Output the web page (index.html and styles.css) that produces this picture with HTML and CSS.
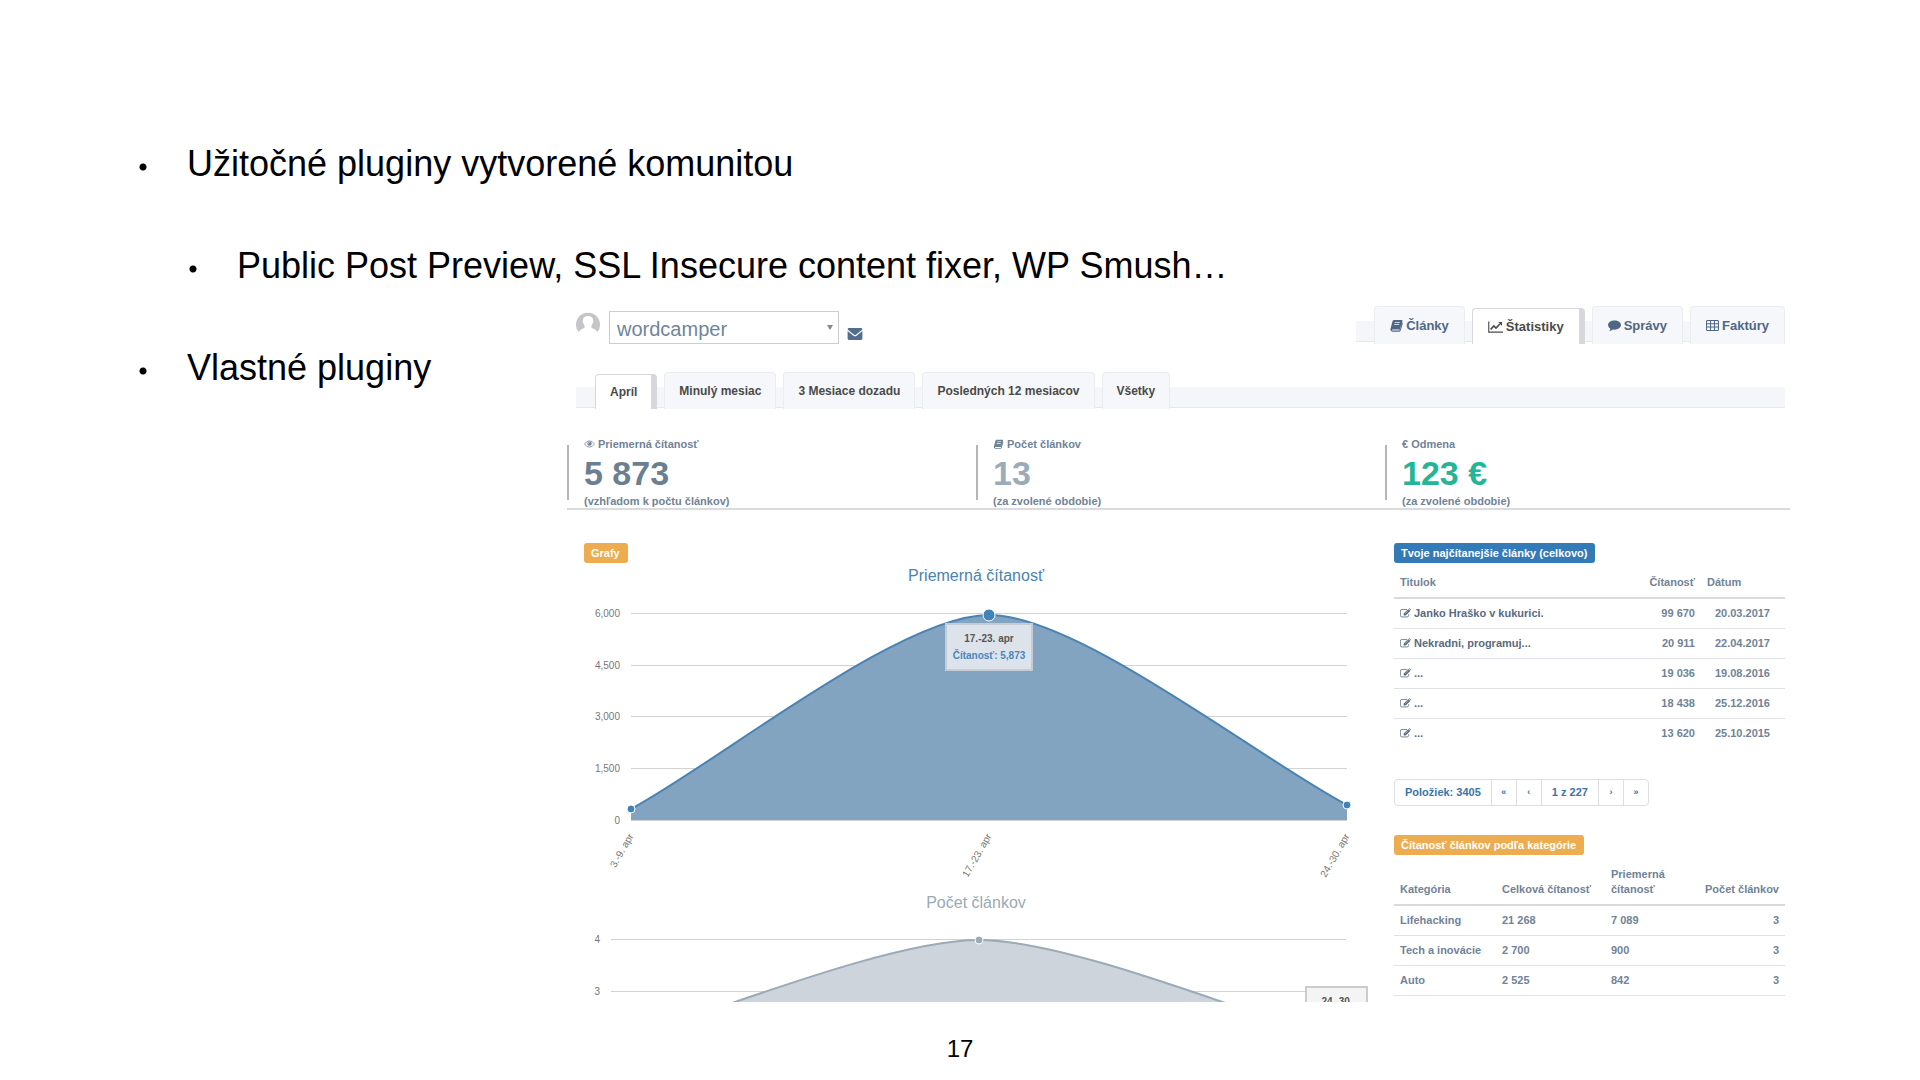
FILE: index.html
```
<!DOCTYPE html>
<html lang="sk">
<head>
    <meta charset="UTF-8">
    <meta name="viewport" content="width=device-width, initial-scale=1.0">
    <title>Užitočné pluginy</title>
    <link rel="stylesheet" href="styles.css">
</head>
<body>
    <!-- Icons shared by the tabs, stats and table -->
    <svg class="sprite" aria-hidden="true">
        <symbol id="icon-book" viewBox="0 0 14 14">
            <path fill="currentColor" fill-rule="evenodd" d="M4.5 1h8q1.2.1.9 1.300l-2.200 8q-.3 1-1.300 1H3q-1 0-1 .6t1 .6h7.200l2.800-8.800q1 .5.700 1.500l-2.200 7.200q-.4 1.200-1.500 1.200H2.300Q.2 13 .4 11L2.800 2.200Q3.200 1 4.500 1zM5.300 3.400l-.3.900h5.400l.3-.9zM4.700 5.600l-.3.900h5.400l.3-.9z"/>
        </symbol>
        <symbol id="icon-chart" viewBox="0 0 16 14">
            <path fill="none" stroke="currentColor" stroke-width="1.200" d="M.8 1v11.500H16"/>
            <path fill="none" stroke="currentColor" stroke-width="1.700" d="M2.800 9.500l3.500-3.600 2.200 2.200 4.200-4.300"/>
            <path fill="currentColor" d="M10.800 1.700H15v4.200z"/>
        </symbol>
        <symbol id="icon-comment" viewBox="0 0 14 14">
            <path fill="currentColor" d="M7 1.500c3.900 0 7 2.200 7 5s-3.100 5-7 5q-.9 0-1.700-.15Q3.600 12.800 1.200 13q1.200-1.100 1.300-2.500Q0 9 0 6.500c0-2.800 3.100-5 7-5z"/>
        </symbol>
        <symbol id="icon-table" viewBox="0 0 14 14">
            <path fill="none" stroke="currentColor" stroke-width="1.100" d="M1.600 1.500h10.800q1 0 1 1v9q0 1-1 1H1.600q-1 0-1-1v-9q0-1 1-1zM.6 5h12.800M.6 8.700h12.800M4.900 1.500v11M9.100 1.500v11"/>
        </symbol>
        <symbol id="icon-eye" viewBox="0 0 14 10">
            <path fill="none" stroke="currentColor" d="M.7 5q2.500-4 6.300-4t6.300 4Q10.800 9 7 9T.7 5z"/>
            <circle cx="7" cy="4.500" r="2.800" fill="currentColor"/>
            <path fill="none" stroke="#fff" stroke-width=".8" d="M5.500 4.500Q5.500 3 7 3"/>
        </symbol>
        <symbol id="icon-edit" viewBox="0 0 14 12">
            <path fill="none" stroke="currentColor" d="M9 1.500H2.500q-2 0-2 2V9q0 2 2 2H9q2 0 2-2V7.500"/>
            <path fill="currentColor" d="M4.700 9.200V6.700L10.600.8l2.500 2.500-5.900 5.900zM11.200.4q.6-.6 1.200 0l1.200 1.200q.5.6 0 1.200z"/>
            <path fill="none" stroke="#fff" stroke-width=".6" d="M6.500 6.700l4-4"/>
        </symbol>
    </svg>

    <main class="slide">
        <ul class="points">
            <li>Užitočné pluginy vytvorené komunitou
                <ul>
                    <li>Public Post Preview, SSL Insecure content fixer, WP Smush…</li>
                </ul>
            </li>
            <li>Vlastné pluginy</li>
        </ul>

        <section class="dashboard">
            <header class="dashboard-header">
                <div class="user">
                    <svg class="avatar" viewBox="0 0 24 24" aria-hidden="true">
                        <path fill="#c4c5c8" d="M2.500 21A12 12 0 1 1 21.500 21Q19.500 18 15.500 16.800V14.500Q17.300 12.500 17.300 9.500 17 5 12 5T6.700 9.500Q6.700 12.500 8.500 14.500V16.800Q4.500 18 2.500 21z"/>
                    </svg>
                    <div class="user-select">
                        <select aria-label="Autor">
                            <option>wordcamper</option>
                        </select>
                    </div>
                    <a class="mail" href="#" aria-label="Napísať správu">
                        <svg viewBox="0 0 16 13">
                            <path fill="currentColor" d="M1.500 0h13Q16 0 16 1.500L9 7.200Q8 8 7 7.200L0 1.500Q0 0 1.500 0zM0 3.300l6.300 5Q8 9.500 9.700 8.300L16 3.300v8.200q0 1.500-1.500 1.500h-13Q0 13 0 11.500z"/>
                        </svg>
                    </a>
                </div>
                <nav class="tabs sections">
                    <a class="tab" href="#"><svg class="icon"><use href="#icon-book"/></svg>Články</a>
                    <a class="tab active" href="#"><svg class="icon wide"><use href="#icon-chart"/></svg>Štatistiky</a>
                    <a class="tab" href="#"><svg class="icon"><use href="#icon-comment"/></svg>Správy</a>
                    <a class="tab" href="#"><svg class="icon"><use href="#icon-table"/></svg>Faktúry</a>
                </nav>
            </header>

            <nav class="tabs periods">
                <a class="tab active" href="#">Apríl</a>
                <a class="tab" href="#">Minulý mesiac</a>
                <a class="tab" href="#">3 Mesiace dozadu</a>
                <a class="tab" href="#">Posledných 12 mesiacov</a>
                <a class="tab" href="#">Všetky</a>
            </nav>

            <div class="stats">
                <div class="stat">
                    <div class="stat-label"><svg class="icon-small"><use href="#icon-eye"/></svg>Priemerná čítanosť</div>
                    <div class="stat-value">5 873</div>
                    <div class="stat-note">(vzhľadom k počtu článkov)</div>
                </div>
                <div class="stat count">
                    <div class="stat-label"><svg class="icon-small"><use href="#icon-book"/></svg>Počet článkov</div>
                    <div class="stat-value">13</div>
                    <div class="stat-note">(za zvolené obdobie)</div>
                </div>
                <div class="stat reward">
                    <div class="stat-label">€ Odmena</div>
                    <div class="stat-value">123 €</div>
                    <div class="stat-note">(za zvolené obdobie)</div>
                </div>
            </div>

            <div class="content">
                <section class="charts">
                    <h2 class="label warning">Grafy</h2>
                    <svg class="chart reads" viewBox="0 0 784 317">
                        <text class="chart-title" x="392" y="18">Priemerná čítanosť</text>
                        <path class="grid" d="M47 50.500H763M47 102.500H763M47 153.500H763M47 205.500H763M47 257.500H763"/>
                        <g class="axis">
                            <text x="36" y="54">6,000</text>
                            <text x="36" y="106">4,500</text>
                            <text x="36" y="157">3,000</text>
                            <text x="36" y="209">1,500</text>
                            <text x="36" y="261">0</text>
                            <text transform="translate(50 273) rotate(-60)">3.-9. apr</text>
                            <text transform="translate(408 273) rotate(-60)">17.-23. apr</text>
                            <text transform="translate(766 273) rotate(-60)">24.-30. apr</text>
                        </g>
                        <path class="area" d="M47 246C136 198 316 52 405 52S674 195 763 242V257H47Z"/>
                        <path class="line" d="M47 246C136 198 316 52 405 52S674 195 763 242"/>
                        <circle class="dot" cx="47" cy="246" r="4"/>
                        <circle class="dot" cx="405" cy="52" r="6"/>
                        <circle class="dot" cx="763" cy="242" r="4"/>
                        <g class="tooltip">
                            <rect x="362" y="61" width="86" height="46"/>
                            <text x="405" y="79">17.-23. apr</text>
                            <text class="tooltip-value" x="405" y="96">Čítanosť: 5,873</text>
                        </g>
                    </svg>
                    <svg class="chart articles" viewBox="0 0 784 180">
                        <text class="chart-title" x="392" y="28">Počet článkov</text>
                        <path class="grid" d="M27 59.500H762M27 111.500H762"/>
                        <g class="axis">
                            <text x="16" y="63">4</text>
                            <text x="16" y="115">3</text>
                        </g>
                        <path class="area" d="M27 163C119 137 303 60 395 60S670 137 762 163V180H27Z"/>
                        <path class="line" d="M27 163C119 137 303 60 395 60S670 137 762 163"/>
                        <circle class="dot" cx="395" cy="60" r="4"/>
                        <g class="tooltip">
                            <rect x="722" y="107" width="61" height="60"/>
                            <text x="753" y="125">24.-30.</text>
                        </g>
                    </svg>
                </section>

                <aside class="side">
                    <h2 class="label primary">Tvoje najčítanejšie články (celkovo)</h2>
                    <table class="top-articles">
                        <thead>
                            <tr>
                                <th>Titulok</th>
                                <th class="num">Čítanosť</th>
                                <th>Dátum</th>
                            </tr>
                        </thead>
                        <tbody>
                            <tr>
                                <td><a href="#"><svg class="icon-small"><use href="#icon-edit"/></svg>Janko Hraško v kukurici.</a></td>
                                <td class="num">99 670</td>
                                <td class="date">20.03.2017</td>
                            </tr>
                            <tr>
                                <td><a href="#"><svg class="icon-small"><use href="#icon-edit"/></svg>Nekradni, programuj...</a></td>
                                <td class="num">20 911</td>
                                <td class="date">22.04.2017</td>
                            </tr>
                            <tr>
                                <td><a href="#"><svg class="icon-small"><use href="#icon-edit"/></svg>...</a></td>
                                <td class="num">19 036</td>
                                <td class="date">19.08.2016</td>
                            </tr>
                            <tr>
                                <td><a href="#"><svg class="icon-small"><use href="#icon-edit"/></svg>...</a></td>
                                <td class="num">18 438</td>
                                <td class="date">25.12.2016</td>
                            </tr>
                            <tr>
                                <td><a href="#"><svg class="icon-small"><use href="#icon-edit"/></svg>...</a></td>
                                <td class="num">13 620</td>
                                <td class="date">25.10.2015</td>
                            </tr>
                        </tbody>
                    </table>

                    <nav class="pagination">
                        <span>Položiek: 3405</span>
                        <a href="#">«</a>
                        <a href="#">‹</a>
                        <span>1 z 227</span>
                        <a href="#">›</a>
                        <a href="#">»</a>
                    </nav>

                    <h2 class="label warning">Čítanosť článkov podľa kategórie</h2>
                    <table class="categories">
                        <thead>
                            <tr>
                                <th>Kategória</th>
                                <th>Celková čítanosť</th>
                                <th>Priemerná čítanosť</th>
                                <th class="num">Počet článkov</th>
                            </tr>
                        </thead>
                        <tbody>
                            <tr>
                                <td>Lifehacking</td>
                                <td>21 268</td>
                                <td>7 089</td>
                                <td class="num">3</td>
                            </tr>
                            <tr>
                                <td>Tech a inovácie</td>
                                <td>2 700</td>
                                <td>900</td>
                                <td class="num">3</td>
                            </tr>
                            <tr>
                                <td>Auto</td>
                                <td>2 525</td>
                                <td>842</td>
                                <td class="num">3</td>
                            </tr>
                        </tbody>
                    </table>
                </aside>
            </div>
        </section>

        <footer class="page-number">17</footer>
    </main>
</body>
</html>
```
FILE: styles.css
```
* {
    box-sizing: border-box;
}

body {
    margin: 0;
    background-color: #fff;
    color: #000;
    font-family: 'Liberation Sans', Arial, sans-serif;
}

a {
    color: inherit;
    text-decoration: none;
}

.sprite {
    display: none;
}

/* Slide: the list runs behind the dashboard, which starts in row 2 */
.slide {
    display: grid;
    grid-template-columns: 567px minmax(0, 1fr);
    grid-template-rows: 306px minmax(0, 1fr) 78px;
    height: 100vh;
    padding-right: 130px;
}

.points {
    grid-column: 1 / -1;
    grid-row: 1 / 3;
    margin: 0;
    padding: 143px 0 0 139px;
    list-style: none;
    font-size: 36px;
    line-height: 42px;
}

.points ul {
    margin: 60px 0;
    padding: 0;
    list-style: none;
}

.points li {
    padding-left: 48px;
    background: radial-gradient(circle at 4px 24px, #000 3px, transparent 4px) no-repeat;
}

.points li li {
    margin-left: 2px;
}

.page-number {
    grid-column: 1 / -1;
    grid-row: 3;
    margin-right: -130px;
    padding-top: 33px;
    text-align: center;
    font-size: 24px;
    line-height: 28px;
}

/* Dashboard */
.dashboard {
    grid-column: 2;
    grid-row: 2;
    overflow: hidden;
    color: #718397;
    font-size: 11px;
    font-weight: bold;
}

.dashboard-header {
    display: flex;
    justify-content: space-between;
    padding: 0 5px 0 9px;
}

.user {
    display: flex;
    align-items: flex-start;
    padding-top: 5px;
}

.avatar {
    width: 24px;
    height: 24px;
    margin-right: 9px;
}

.user-select {
    position: relative;
}

.user-select::after {
    content: "";
    position: absolute;
    top: 14px;
    right: 6px;
    border: 3px solid transparent;
    border-top: 5px solid #888;
    border-bottom: 0;
}

.user-select select {
    display: block;
    width: 230px;
    height: 33px;
    padding: 2px 7px 0;
    border: 1px solid #ccc;
    border-radius: 0;
    background-color: #fff;
    appearance: none;
    color: #71859b;
    font-family: inherit;
    font-size: 20px;
}

.mail {
    margin: 17px 0 0 8px;
    color: #536d8c;
}

.mail svg {
    display: block;
    width: 16px;
    height: 12px;
}

/* Tabs */
.tabs {
    display: flex;
    gap: 7px;
    background: linear-gradient(#f4f6fa 20px, #e6e8ec 20px) 0 15px / 100% 21px no-repeat;
}

.tab {
    display: flex;
    align-items: center;
    height: 38px;
    padding: 0 15px;
    border: 1px solid #eaecf0;
    border-bottom: 0;
    border-radius: 4px 4px 0 0;
    background-color: #f5f7fa;
    white-space: nowrap;
}

.tab.active {
    height: 36px;
    margin-top: 2px;
    border-color: #d6d8dd;
    border-right-width: 6px;
    background-color: #fff;
    color: #4a4a4a;
}

.sections {
    padding-left: 18px;
    color: #4f6785;
    font-size: 13px;
}

.periods {
    margin: 28px 5px 0 9px;
    padding-left: 19px;
    color: #4a4a4a;
    font-size: 12px;
}

.periods .tab {
    height: 37px;
    padding: 0 14px;
}

.periods .tab.active {
    height: 35px;
}

.icon {
    width: 13px;
    height: 13px;
    margin-right: 3px;
}

.icon.wide {
    width: 15px;
    height: 14px;
}

.icon-small {
    width: 11px;
    height: 10px;
    margin-right: 3px;
    vertical-align: -1px;
}

/* Stats */
.stats {
    display: grid;
    grid-template-columns: repeat(3, 1fr);
    column-gap: 4px;
    margin-top: 27px;
    border-bottom: 2px solid #dadbde;
}

.stat {
    padding-left: 17px;
    background: linear-gradient(#b3b5b9, #b3b5b9) 0 9px / 2px 55px no-repeat;
}

.stat-label {
    line-height: 16px;
}

.stat-value {
    color: #6b7f92;
    font-size: 34px;
    line-height: 42px;
}

.stat-note {
    line-height: 14px;
}

.count .stat-value {
    color: #9aabb9;
}

.reward .stat-value {
    color: #24b598;
}

/* Charts and tables */
.content {
    display: grid;
    grid-template-columns: minmax(0, 1fr) 391px;
    gap: 26px;
    padding: 33px 5px 0 17px;
}

.label {
    width: fit-content;
    margin: 0;
    padding: 0 8px 0 7px;
    border-radius: 3px;
    color: #fff;
    font-size: 11px;
    line-height: 20px;
}

.label.warning {
    background-color: #ecac4f;
}

.label.primary {
    background-color: #337ab7;
}

.chart {
    display: block;
    width: 100%;
    font-weight: normal;
}

.chart-title {
    fill: var(--line);
    font-size: 16px;
    text-anchor: middle;
}

.reads {
    --line: #4a83b2;
    --fill: #83a4c1;
    --dot: #3f83b8;
}

.articles {
    --line: #9aaab6;
    --fill: #cdd4db;
    --dot: #9aaab6;
}

.grid {
    stroke: #d2d2d2;
}

.axis {
    fill: #777;
    font-size: 10px;
    text-anchor: end;
}

.area {
    fill: var(--fill);
}

.line {
    fill: none;
    stroke: var(--line);
    stroke-width: 2;
}

.dot {
    fill: var(--dot);
    stroke: #fff;
}

.tooltip {
    fill: #555;
    font-size: 10px;
    font-weight: bold;
    text-anchor: middle;
}

.tooltip rect {
    fill: #dde3ea;
    stroke: #c5ccd6;
    stroke-width: 2;
}

.articles .tooltip rect {
    fill: #f4f4f4;
    stroke: #ccc;
}

.tooltip-value {
    fill: #4a86bd;
}

table {
    width: 100%;
    border-collapse: separate;
    border-spacing: 0;
    table-layout: fixed;
}

th {
    padding: 12px 6px 7px;
    border-bottom: 2px solid #d8dadd;
    line-height: 15px;
    text-align: left;
    vertical-align: bottom;
}

td {
    padding: 6px;
    border-bottom: 1px solid #e0e2e5;
    line-height: 17px;
}

td a {
    color: #586b80;
}

.num {
    text-align: right;
}

.top-articles th:nth-child(2) {
    width: 64px;
}

.top-articles th:nth-child(3) {
    width: 84px;
}

.top-articles tr:last-child td {
    border-bottom: 0;
}

.date {
    padding-right: 15px;
    text-align: right;
}

.categories th:nth-child(1) {
    width: 102px;
}

.categories th:nth-child(2) {
    width: 109px;
}

.categories th:nth-child(3) {
    width: 78px;
}

.categories .num {
    padding-left: 0;
}

.pagination {
    display: flex;
    width: fit-content;
    margin: 31px 0 29px;
    border: 1px solid #dcdee1;
    border-radius: 4px;
    color: #3c73a6;
    line-height: 25px;
}

.pagination span {
    padding: 0 10px;
}

.pagination a {
    width: 25px;
    font-size: 9px;
    text-align: center;
}

.pagination > * + * {
    border-left: 1px solid #dcdee1;
}
```
